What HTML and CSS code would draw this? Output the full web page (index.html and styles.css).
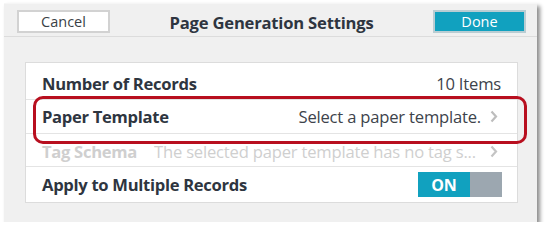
FILE: index.html
```html
<!DOCTYPE html>
<html>
<head>
<meta charset="utf-8">
<link rel="stylesheet" href="styles.css">
</head>
<body>
<div class="dialog">
  <div class="header">
    <button class="btn btn-cancel">Cancel</button>
    <div class="title">Page Generation Settings</div>
    <button class="btn btn-done">Done</button>
  </div>
  <div class="content">
    <div class="card">
      <div class="row r1">
        <span class="label">Number of Records</span>
        <span class="value">10 Items</span>
      </div>
      <div class="row r2">
        <span class="label">Paper Template</span>
        <span class="value">Select a paper template.</span>
        <svg class="chev" width="8" height="13" viewBox="0 0 8 13"><path d="M1.5 1.5 L6 6.5 L1.5 11.5" fill="none" stroke="#bdbdbd" stroke-width="2.2"/></svg>
      </div>
      <div class="row r3 disabled">
        <span class="label">Tag Schema</span>
        <span class="value trunc">The selected paper template has no tag s...</span>
        <svg class="chev" width="8" height="13" viewBox="0 0 8 13"><path d="M1.5 1.5 L6 6.5 L1.5 11.5" fill="none" stroke="#c4c4c4" stroke-width="2.2"/></svg>
      </div>
      <div class="row r4">
        <span class="label">Apply to Multiple Records</span>
        <div class="toggle"><span class="on">ON</span><span class="off"></span></div>
      </div>
      <div class="highlight"></div>
    </div>
  </div>
</div>
</body>
</html>
```

FILE: styles.css
```css
html, body {
  margin: 0;
  padding: 0;
  background: #ffffff;
}
body {
  font-family: "Open Sans", "Noto Sans", sans-serif;
  color: #2e3540;
  padding: 3px 0 0 4px;
}
.dialog {
  width: 533px;
  height: 219px;
  background: #f0f0f0;
  box-shadow: 3px 3px 4px rgba(0, 0, 0, 0.45);
  border-top: 1px solid #f6f6f6;
  box-sizing: border-box;
}
.header {
  height: 33px;
  box-sizing: border-box;
  border-bottom: 1px solid #dcdcdc;
  display: grid;
  grid-template-columns: 93px 1fr 93px;
  padding: 6px 11px 0 13px;
  align-items: start;
}
.btn {
  height: 23px;
  box-sizing: border-box;
  font-family: "Open Sans", "Noto Sans", sans-serif;
  font-size: 14.5px;
  padding: 0;
  line-height: 19px;
  cursor: pointer;
}
.btn-cancel {
  background: #ffffff;
  border: 2px solid #d2d2d2;
  color: #3a3f46;
}
.btn-done {
  background: #11a1bf;
  border: 2px solid #b9cdd3;
  color: #ffffff;
}
.title {
  text-align: center;
  font-weight: 700;
  font-size: 16.6px;
  line-height: 23px;
  padding-top: 1px;
  color: #2e3540;
  letter-spacing: -0.2px;
}
.content {
  padding: 25px 19px 0 21px;
}
.card {
  position: relative;
  background: #ffffff;
  border: 1px solid #dcdcdc;
  height: 141px;
  box-sizing: border-box;
}
.row {
  display: flex;
  align-items: center;
  padding: 0 16px 0 16px;
  border-bottom: 1px solid #e4e4e4;
  box-sizing: border-box;
  white-space: nowrap;
}
.r1 { height: 37px; padding-top: 4px; }
.r2 { height: 34px; }
.r3 { height: 33px; padding-top: 2px; }
.r4 { height: 35px; border-bottom: none; }
.label {
  font-weight: 700;
  font-size: 16.6px;
  letter-spacing: -0.3px;
  flex: none;
}
.value {
  margin-left: auto;
  font-size: 16.6px;
  letter-spacing: -0.2px;
  color: #3d434b;
}
.trunc {
  margin-left: 17px;
  overflow: hidden;
  flex: 1;
  text-align: left;
}
.chev {
  margin-left: 9px;
  margin-right: 3px;
  flex: none;
}
.disabled .label,
.disabled .value {
  color: #cfcfcf;
}
.toggle {
  margin-left: auto;
  margin-right: -1px;
  display: flex;
  height: 25px;
  width: 84px;
}
.toggle .on {
  width: 52px;
  background: #11a1bf;
  color: #ffffff;
  font-weight: 700;
  font-size: 16px;
  display: flex;
  align-items: center;
  justify-content: center;
}
.toggle .off {
  flex: 1;
  background: #9ca7b0;
}
.highlight {
  position: absolute;
  left: 7px;
  top: 33px;
  width: 494px;
  height: 48px;
  box-sizing: border-box;
  border: 3px solid #b80f1f;
  border-radius: 10px;
}
```
